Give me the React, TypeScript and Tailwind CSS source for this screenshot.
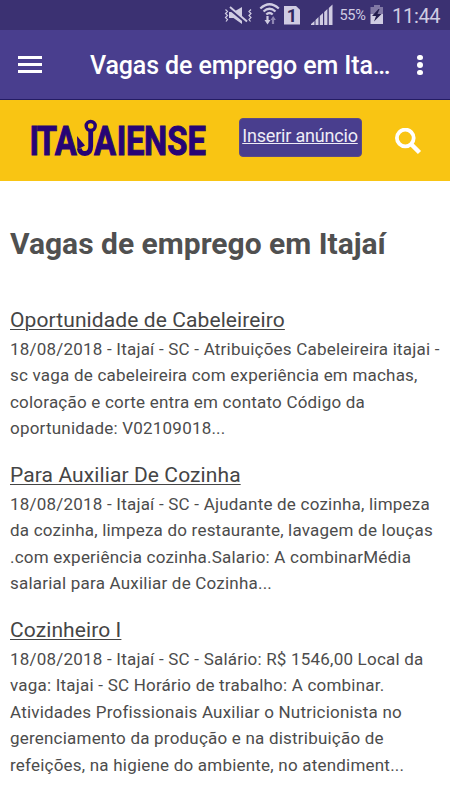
import React from 'react';

interface Job {
  title: string;
  lines: string[];
}

const jobs: Job[] = [
  {
    title: 'Oportunidade de Cabeleireiro',
    lines: [
      '18/08/2018 - Itajaí - SC - Atribuições Cabeleireira itajai -',
      'sc vaga de cabeleireira com experiência em machas,',
      'coloração e corte entra em contato Código da',
      'oportunidade: V02109018...',
    ],
  },
  {
    title: 'Para Auxiliar De Cozinha',
    lines: [
      '18/08/2018 - Itajaí - SC - Ajudante de cozinha, limpeza',
      'da cozinha, limpeza do restaurante, lavagem de louças',
      '.com experiência cozinha.Salario: A combinarMédia',
      'salarial para Auxiliar de Cozinha...',
    ],
  },
  {
    title: 'Cozinheiro I',
    lines: [
      '18/08/2018 - Itajaí - SC - Salário: R$ 1546,00 Local da',
      'vaga: Itajai - SC Horário de trabalho: A combinar.',
      'Atividades Profissionais Auxiliar o Nutricionista no',
      'gerenciamento da produção e na distribuição de',
      'refeições, na higiene do ambiente, no atendiment...',
    ],
  },
];

function StatusBar() {
  return (
    <div className="flex h-[30px] shrink-0 items-center bg-[#3b3172] pl-[224px] text-[#d0cce2]">
      {/* Vibrate / muted */}
      <svg className="h-[30px] w-[29px] shrink-0" viewBox="0 0 29 30" fill="none" stroke="currentColor">
        <path d="M1.5 9.5l2 2-2 2 2 2-2 2 2 2-1.500 2M27 9.500l-2 2 2 2-2 2 2 2-2 2 1.500 2" strokeWidth="1.200" />
        <path d="M5 12h4.500l8.500-5v17l-8.500-6H5z" fill="currentColor" stroke="none" />
        <path d="M5 8l18 15" stroke="#3b3172" strokeWidth="3" />
        <path d="M6 7l17 14.500" strokeWidth="1.900" />
      </svg>
      {/* Wifi */}
      <svg className="ml-[6px] h-[30px] w-[22px] shrink-0" viewBox="0 0 22 30" fill="none" stroke="currentColor" strokeWidth="2.200">
        <path d="M1.300 8.500Q10.500 0 19.800 8.500M4.500 11.500Q10.500 6 16.500 11.500M7.300 14.500Q10.500 11.500 13.700 14.500" />
        <path d="M8.500 16v6" />
        <path d="M5.500 20h6l-3 4.500z" fill="currentColor" stroke="none" />
        <path d="M14 24v-5.500" stroke="#8e86b2" />
        <path d="M11.500 20l2.700-4 2.700 4z" fill="#8e86b2" stroke="none" />
      </svg>
      <div className="ml-[3px] flex h-[19px] w-[16px] shrink-0 items-center justify-center bg-[#d0cce2] text-[18px] font-bold text-[#30285f] [clip-path:polygon(0_0,72%_0,100%_22%,100%_100%,0_100%)]">
        1
      </div>
      {/* Signal */}
      <svg className="ml-[11px] h-[30px] w-[22px] shrink-0" viewBox="0 0 22 30" fill="currentColor">
        <path d="M0 25v-1l3.500-3v4zM4.500 25v-5l3-3v8zM8.800 25v-9l3.200-3v12zM13.200 25V12l3.200-3v16zM17.800 25V8L21.500 4.500V25z" />
      </svg>
      <span className="ml-[6.500px] w-[27px] shrink-0 whitespace-nowrap pt-px text-[14.500px] tracking-[-0.300px]">55%</span>
      {/* Battery */}
      <svg className="ml-[3.500px] h-[30px] w-[14px] shrink-0" viewBox="0 0 14 30" fill="currentColor">
        <path d="M4 5h6v2h3v7H.500V7H4z" fill="#8178a5" />
        <path d="M.500 14H13v10H.500z" />
        <path d="M8.500 9L2 16h4l-2 5.500L11.500 14H7.500l2-5z" fill="#241d4e" />
      </svg>
      <span className="ml-[8px] whitespace-nowrap pt-px text-[20px] tracking-[-0.300px]">11:44</span>
    </div>
  );
}

function AppBar() {
  return (
    <header className="flex h-[70px] shrink-0 items-center border-b border-[#241c64] bg-[#493e8e] pl-[18px] text-white">
      <button className="flex w-6 flex-col gap-1" aria-label="Menu">
        <span className="h-[3px] w-6 bg-white" />
        <span className="h-[3px] w-6 bg-white" />
        <span className="h-[3px] w-6 bg-white" />
      </button>
      <h1 className="ml-12 w-[302px] whitespace-nowrap pt-[3px] text-[25px] font-medium tracking-[-0.120px]">
        Vagas de emprego em Ita
        <span className="tracking-[-1.400px]">...</span>
      </h1>
      <button className="ml-[25px] flex flex-col gap-[2px] pt-px" aria-label="Mais opções">
        <span className="size-[5.500px] rounded-full bg-white" />
        <span className="size-[5.500px] rounded-full bg-white" />
        <span className="size-[5.500px] rounded-full bg-white" />
      </button>
    </header>
  );
}

function Logo() {
  return (
    <svg
      className="h-[60px] w-[186px] shrink-0"
      viewBox="26 109 186 60"
      fill="#270475"
      fontFamily="Roboto, sans-serif"
      fontWeight="700"
      fontSize="41"
      stroke="#270475"
      strokeWidth="1"
    >
      <g transform="scale(0.8 1)">
        <text x="37 46 68.500" y="155.500">ITA</text>
        <text x="117.500 146 157.500 180 209 234.500" y="155.500">AIENSE</text>
      </g>
      {/* Fish hook between the two halves */}
      <circle cx="90.700" cy="126" r="4.500" fill="none" strokeWidth="3.400" />
      <path
        d="M90.700 130v16c0 4.800-2 7.500-5.700 7.500-3.500 0-5.300-2-5.700-5"
        fill="none"
        strokeWidth="4.800"
      />
      <path d="M77 136l8 9.500-7.500 4z" stroke="none" />
    </svg>
  );
}

function Banner() {
  return (
    <div className="flex h-[81px] shrink-0 items-start bg-[#f9c513] pl-[26px]">
      <div className="pt-[9px]">
        <Logo />
      </div>
      <a className="ml-[26.500px] mt-[17.500px] h-[39px] w-[123px] shrink-0 rounded-[4px] border border-[#5c4a85] bg-[#493e8e] pt-[5px] text-center text-[18px] leading-[24px] tracking-[-0.190px] text-[#eeecf6] underline">
        Inserir anúncio
      </a>
      {/* Search */}
      <svg className="ml-[33px] mt-[28px] size-[27px] shrink-0" viewBox="0 0 27 27" fill="none" stroke="white">
        <circle cx="10.300" cy="10" r="8.400" strokeWidth="3.800" />
        <path d="M16 16l8.500 8.500" strokeWidth="4.500" />
      </svg>
    </div>
  );
}

export default function App() {
  return (
    <div className="flex h-[800px] w-[450px] flex-col overflow-hidden bg-white font-['Roboto',sans-serif]">
      <StatusBar />
      <AppBar />
      <Banner />
      <main className="px-[10px] pt-[43px]">
        <h2 className="h-[82px] whitespace-nowrap text-[30px] font-bold leading-[40px] text-[#505050]">
          Vagas de emprego em Itajaí
        </h2>
        {jobs.map((job) => (
          <article key={job.title} className="mb-[19.400px]">
            <h3 className="mb-[2px] whitespace-nowrap text-[21px] leading-[28px] tracking-[0.100px] text-[#454545] underline decoration-1 underline-offset-2">
              {job.title}
            </h3>
            <p className="text-[17px] leading-[26.400px] tracking-[0.210px] text-[#4c4c4c]">
              {job.lines.map((line) => (
                <span key={line} className="block whitespace-nowrap">{line}</span>
              ))}
            </p>
          </article>
        ))}
      </main>
    </div>
  );
}
